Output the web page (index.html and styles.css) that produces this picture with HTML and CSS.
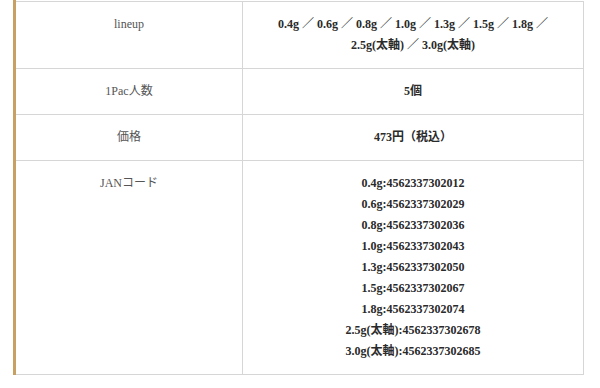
FILE: index.html
```html
<!DOCTYPE html>
<html lang="ja">
<head>
<meta charset="utf-8">
<link rel="stylesheet" href="styles.css">
</head>
<body>
<div class="spec">
  <table class="spec-table">
    <tr>
      <th>lineup</th>
      <td>0.4g ／ 0.6g ／ 0.8g ／ 1.0g ／ 1.3g ／ 1.5g ／ 1.8g ／<br>2.5g(太軸) ／ 3.0g(太軸)</td>
    </tr>
    <tr>
      <th>1Pac人数</th>
      <td>5個</td>
    </tr>
    <tr>
      <th>価格</th>
      <td>473円（税込）</td>
    </tr>
    <tr>
      <th>JANコード</th>
      <td>0.4g:4562337302012<br>0.6g:4562337302029<br>0.8g:4562337302036<br>1.0g:4562337302043<br>1.3g:4562337302050<br>1.5g:4562337302067<br>1.8g:4562337302074<br>2.5g(太軸):4562337302678<br>3.0g(太軸):4562337302685</td>
    </tr>
  </table>
</div>
</body>
</html>
```
FILE: styles.css
```css
html, body {
  margin: 0;
  padding: 0;
  background: #fff;
}
.spec {
  margin-left: 13px;
  width: 568px;
  border-left: 3px solid #c9a064;
  padding-top: 1px;
}
.spec-table {
  width: 100%;
  border-collapse: collapse;
  font-family: "Liberation Serif", "Noto Sans CJK JP", serif;
  font-size: 12px;
  line-height: 21px;
}
.spec-table th,
.spec-table td {
  border: 1px solid #d6d6d6;
  padding: 12px 12px;
  text-align: center;
  vertical-align: top;
}
.spec-table th {
  width: 202px;
  border-left: none;
  font-weight: normal;
  color: #555;
}
.spec-table td {
  color: #2a2a2a;
  font-weight: bold;
}
```
